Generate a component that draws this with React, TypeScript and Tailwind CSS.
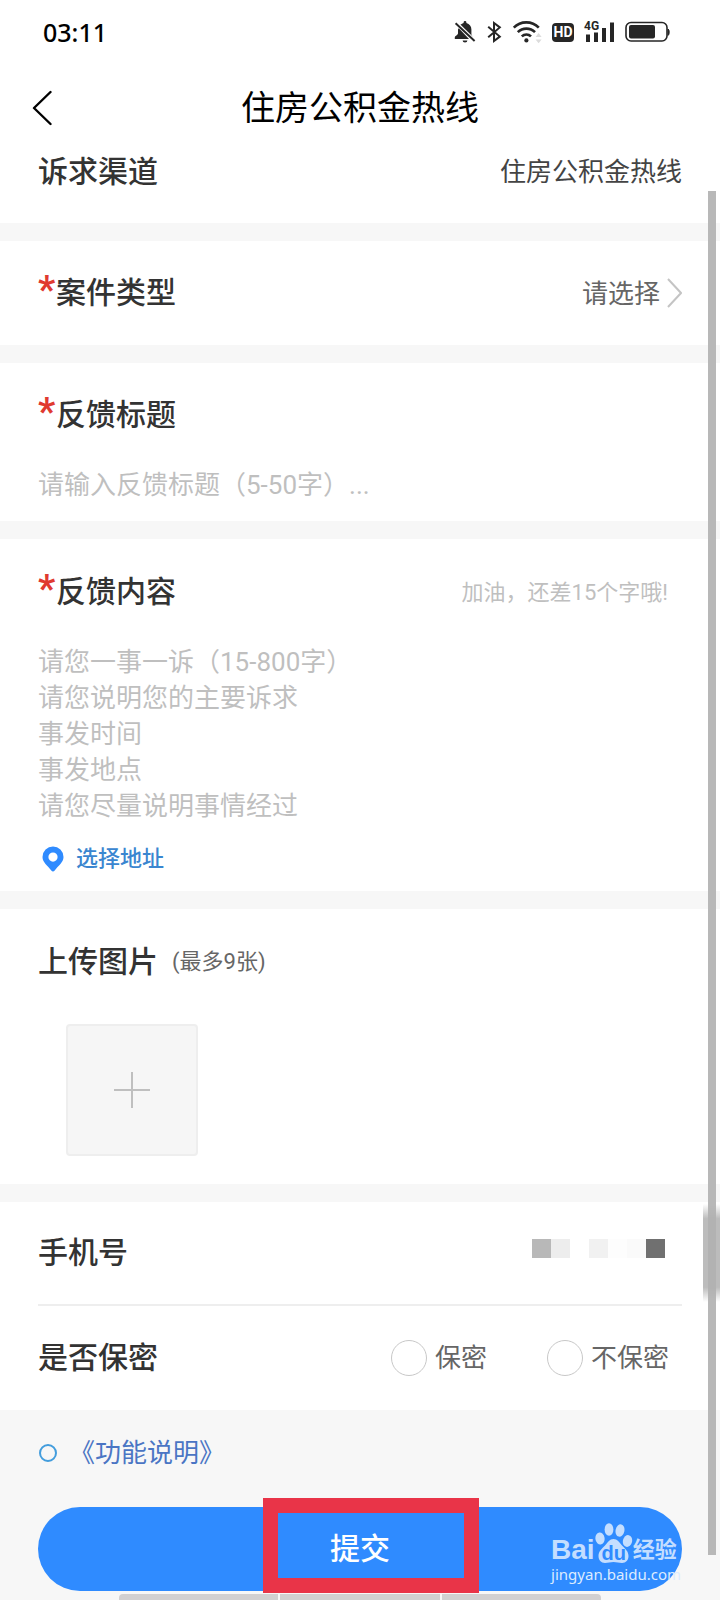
import type { ReactNode } from "react";

function BellOffIcon() {
  return (
    <svg viewBox="0 0 22 24" className="h-6 w-6" fill="#262626" aria-hidden="true">
      <path d="M7.200 4.200C8 3.400 9 3 9.600 2.900V2.400a1.400 1.400 0 0 1 2.800 0V2.900c3.200.8 5 3.400 5 6.500v5.200c0 .7 1.200 1.700 2 2.600L6.400 4.600z" />
      <path d="M4.800 8.200 15 19H.8v-1.800c0-1 3.200-2.400 3.200-3.600V9.600c0-.5.4-1 .8-1.400z" />
      <path d="M8.600 20.600h4.800a2.400 2 0 0 1-4.800 0z" />
      <path d="M1.600 3.200 20.600 21" stroke="#262626" strokeWidth="2" />
    </svg>
  );
}

function BluetoothIcon() {
  return (
    <svg viewBox="0 0 15 24" className="h-6 w-[15px]" fill="none" stroke="#262626" strokeWidth="2" aria-hidden="true">
      <path d="M1.200 6.800 12.800 16.600 7 21V3l5.800 4.400L1.200 17.200" />
    </svg>
  );
}

function WifiIcon() {
  return (
    <svg viewBox="0 0 30 24" className="h-6 w-[30px]" fill="none" stroke="#262626" aria-hidden="true">
      <path d="M1.800 7.600C8.600.6 20 .6 26.800 7.600M5.800 12.200c4.800-4.800 12.400-4.800 17.200 0M9.800 16.400c2.600-2.600 6.600-2.600 9.200 0" strokeWidth="2.600" />
      <circle cx="14.400" cy="20.400" r="2.100" fill="#262626" stroke="none" />
      <path d="M23.600 17 26.600 13l3 4zM23.600 19.600h6l-3 3.600z" fill="#dcdcdc" stroke="none" />
    </svg>
  );
}

function SignalIcon() {
  return (
    <span className="relative block h-6 w-[31px]">
      <svg viewBox="0 0 31 24" className="h-6 w-[31px]" fill="#262626" aria-hidden="true">
        <path d="M2 14.500h4V22H2zM10 12.500h4V22h-4zM18 8h4v14h-4zM26 2.500h4V22h-4z" />
      </svg>
      <span className="absolute top-0 left-0 text-[12px] leading-3 font-bold text-[#262626]">4G</span>
    </span>
  );
}

function BatteryIcon() {
  return (
    <svg viewBox="0 0 45 24" className="h-6 w-[45px]" fill="none" aria-hidden="true">
      <rect x="1" y="2.500" width="41" height="18.500" rx="5" stroke="#262626" strokeWidth="1.600" />
      <rect x="4" y="5" width="26" height="13.500" rx="2" fill="#262626" />
      <path d="M43 9c1.600.4 1.600 6 0 6.400z" fill="#262626" stroke="#262626" />
    </svg>
  );
}

function PinIcon() {
  return (
    <svg viewBox="0 0 22 26" className="h-[26px] w-[22px]" aria-hidden="true">
      <path fillRule="evenodd" d="M11 .5a10.500 10.500 0 0 1 10.500 10.500c0 5.400-5.200 8.600-8.800 13.600-.9 1.200-2.500 1.200-3.400 0C5.700 19.600.5 16.400.5 11A10.500 10.500 0 0 1 11 .5zM11 6.500a4.600 4.600 0 1 0 0 9.200A4.600 4.600 0 0 0 11 6.500z" fill="#2f8bff" />
    </svg>
  );
}

function PawLogo() {
  return (
    <svg viewBox="0 0 38 42" className="h-[42px] w-[38px]" fill="#c4deff" aria-hidden="true">
      <ellipse cx="5" cy="16.500" rx="4.600" ry="6" transform="rotate(-8 5 16.500)" />
      <ellipse cx="14" cy="7.500" rx="4.400" ry="6.200" />
      <ellipse cx="25" cy="8.500" rx="4.400" ry="6.200" transform="rotate(12 25 8.500)" />
      <ellipse cx="32.500" cy="19" rx="4.600" ry="6" transform="rotate(12 32.500 19)" />
      <path d="M18.500 17c4 0 5.500 3 8.500 6.500 3.500 3.500 6.500 6 6.500 10.500 0 4-2.500 7-6.500 7-3 0-5.500-1-8.500-1s-5.500 1-8.500 1c-4 0-6.500-3-6.500-7 0-4.500 3-7 6.500-10.500 3-3.500 4.500-6.500 8.500-6.500z" />
    </svg>
  );
}

function Label({ children, required, htmlFor }: { children: ReactNode; required?: boolean; htmlFor?: string }) {
  return (
    <label htmlFor={htmlFor} className="flex text-[30px] leading-[44px] font-medium text-[#333]">
      {required && <span className="w-[18px] text-[38px] leading-[38px] font-bold text-[#e03a30]">*</span>}
      {children}
    </label>
  );
}

function Divider() {
  return <div className="h-[18px] bg-[#f7f7f7]" />;
}

function Choice({ label }: { label: string }) {
  return (
    <label className="flex items-center gap-2 text-[26px] leading-9 text-[#666]">
      <input type="radio" name="secret" className="size-9 appearance-none rounded-full border border-[#c8c8c8] bg-white checked:bg-[#2f8bff]" />
      {label}
    </label>
  );
}

export default function App() {
  return (
    <div className="relative min-h-screen overflow-hidden bg-[#f7f7f7] font-[Roboto,'Noto_Sans_CJK_SC',sans-serif]">
      <header className="bg-white">
        <div className="flex h-16 items-center justify-between pr-[50px] pl-[43px]">
          <time className="font-['Noto_Sans',sans-serif] text-[25px] leading-8 font-medium text-black">03:11</time>
          <div className="flex items-center gap-[10px]">
            <BellOffIcon />
            <BluetoothIcon />
            <WifiIcon />
            <span className="flex h-[19px] w-[22px] items-center justify-center rounded bg-[#262626] text-[14px] leading-none font-bold text-white">HD</span>
            <SignalIcon />
            <BatteryIcon />
          </div>
        </div>
        <div className="grid h-[86px] grid-cols-[60px_1fr_60px] items-center pt-[2px]">
          <button type="button" aria-label="返回" className="pl-8">
            <svg viewBox="0 0 20 36" className="h-9 w-5" fill="none" stroke="#000" strokeWidth="2.400" strokeLinecap="round" strokeLinejoin="round">
              <path d="M18.500 2 2 18l16.500 16" />
            </svg>
          </button>
          <h1 className="text-center text-[34px] leading-[44px] text-black">住房公积金热线</h1>
        </div>
      </header>

      <main>
        <section className="flex items-center justify-between bg-white px-[38px] pb-[29px]">
          <Label>诉求渠道</Label>
          <span className="text-[26px] leading-[44px] text-[#444]">住房公积金热线</span>
        </section>
        <Divider />

        <section className="flex h-[104px] items-center justify-between bg-white px-[38px]">
          <Label required htmlFor="case-type">案件类型</Label>
          <div className="flex items-center gap-[6px]">
            <select id="case-type" className="appearance-none bg-transparent pt-[2px] text-[26px] leading-9 text-[#666]">
              <option>请选择</option>
            </select>
            <svg viewBox="0 0 15 30" className="h-[30px] w-[15px]" fill="none" stroke="#c4c4c4" strokeWidth="2" aria-hidden="true">
              <path d="m1 1 13 14L1 29" />
            </svg>
          </div>
        </section>
        <Divider />

        <section className="bg-white px-[38px] pt-[30px] pb-[18px]">
          <Label required htmlFor="title">反馈标题</Label>
          <input
            id="title"
            placeholder="请输入反馈标题（5-50字）..."
            className="mt-[30px] block h-9 w-full text-[26px] leading-9 text-[#333] outline-none placeholder:text-[#bfbfbf]"
          />
        </section>
        <Divider />

        <section className="bg-white px-[38px] pt-[31px] pb-4">
          <div className="flex items-center justify-between pr-[14px]">
            <Label required htmlFor="content">反馈内容</Label>
            <span className="pt-[2px] text-[22px] leading-[42px] text-[#bfbfbf]">加油，还差15个字哦!</span>
          </div>
          <textarea
            id="content"
            placeholder={"请您一事一诉（15-800字）\n请您说明您的主要诉求\n事发时间\n事发地点\n请您尽量说明事情经过"}
            className="mt-[30px] block h-[184px] w-full resize-none overflow-hidden text-[26px] leading-9 text-[#333] outline-none placeholder:text-[#bfbfbf]"
          />
          <button type="button" className="mt-[15px] flex h-8 items-center gap-3 pl-1 text-[22px] leading-8 font-medium text-[#3a86d0]">
            <PinIcon />
            选择地址
          </button>
        </section>
        <Divider />

        <section className="bg-white px-[38px] pt-[31px] pb-7">
          <div className="flex items-center gap-[14px]">
            <Label>上传图片</Label>
            <span className="text-[22px] leading-[44px] text-[#666]">(最多9张)</span>
          </div>
          <button type="button" aria-label="上传图片" className="mt-10 ml-7 flex size-[132px] items-center justify-center rounded-sm border-2 border-[#eee] bg-[#f6f6f6]">
            <svg viewBox="0 0 38 38" className="size-[38px]" stroke="#bfbfbf" strokeWidth="2">
              <path d="M19 1v36M1 19h36" />
            </svg>
          </button>
        </section>
        <Divider />

        <section className="bg-white px-[38px]">
          <div className="flex h-[104px] items-center justify-between border-b-2 border-[#eee] pr-[17px]">
            <Label>手机号</Label>
            <div className="mb-[10px] flex">
              <span className="size-[19px] bg-[#b8b8b8]" />
              <span className="size-[19px] bg-[#ededed]" />
              <span className="size-[19px]" />
              <span className="size-[19px] bg-[#f1f1f1]" />
              <span className="size-[19px] bg-[#fdfdfd]" />
              <span className="size-[19px] bg-[#fafafa]" />
              <span className="size-[19px] bg-[#707070]" />
            </div>
          </div>
          <div className="flex h-[104px] items-center justify-between pr-[13px]">
            <Label>是否保密</Label>
            <div className="flex items-center gap-[60px]">
              <Choice label="保密" />
              <Choice label="不保密" />
            </div>
          </div>
        </section>
      </main>

      <footer className="px-[38px] pt-[25px]">
        <div className="flex items-center gap-3">
          <input type="checkbox" aria-label="功能说明" className="ml-px size-[18px] appearance-none rounded-full border-2 border-[#439ddd] checked:bg-[#439ddd]" />
          <a href="#guide" className="text-[26px] leading-9 text-[#4a75c4]">《功能说明》</a>
        </div>
        <button type="submit" className="relative mt-9 flex h-[84px] w-full items-center justify-center rounded-full bg-[#2f8bff] text-[30px] leading-[44px] font-medium text-white">
          提交
          <span className="absolute -top-[9px] left-1/2 h-[95px] w-[216px] -translate-x-[97px] border-[15px] border-[#e93448]" />
        </button>
        <div className="mx-auto mt-[3px] flex h-[6px] w-[482px] gap-[2px] overflow-hidden rounded-t">
          <span className="flex-1 bg-[#d2d0d1]" />
          <span className="flex-1 bg-[#d2d0d1]" />
          <span className="flex-1 bg-[#d2d0d1]" />
        </div>
      </footer>

      <div className="pointer-events-none absolute right-0 bottom-[298px] h-[98px] w-[17px] bg-[linear-gradient(to_bottom,transparent,#bcbcbc_15%,#bcbcbc_85%,transparent)]" />
      <div className="pointer-events-none absolute top-[191px] right-1 bottom-[45px] w-2 bg-[#b0b0b0]/90" />

      <div className="pointer-events-none absolute right-[39px] bottom-4 text-[#c4deff]">
        <div className="flex h-[42px] items-end">
          <span className="font-['Liberation_Sans',sans-serif] text-[28px] leading-7 font-bold">Bai</span>
          <span className="relative">
            <PawLogo />
            <span className="absolute inset-x-0 bottom-px text-center font-['Liberation_Sans',sans-serif] text-[20px] leading-5 font-bold text-[#2f8bff]">du</span>
          </span>
          <span className="text-[22px] leading-7 font-bold">经验</span>
        </div>
        <div className="font-['Noto_Sans',sans-serif] text-[15px] leading-5 text-[#dcebff]">jingyan.baidu.com</div>
      </div>
    </div>
  );
}
